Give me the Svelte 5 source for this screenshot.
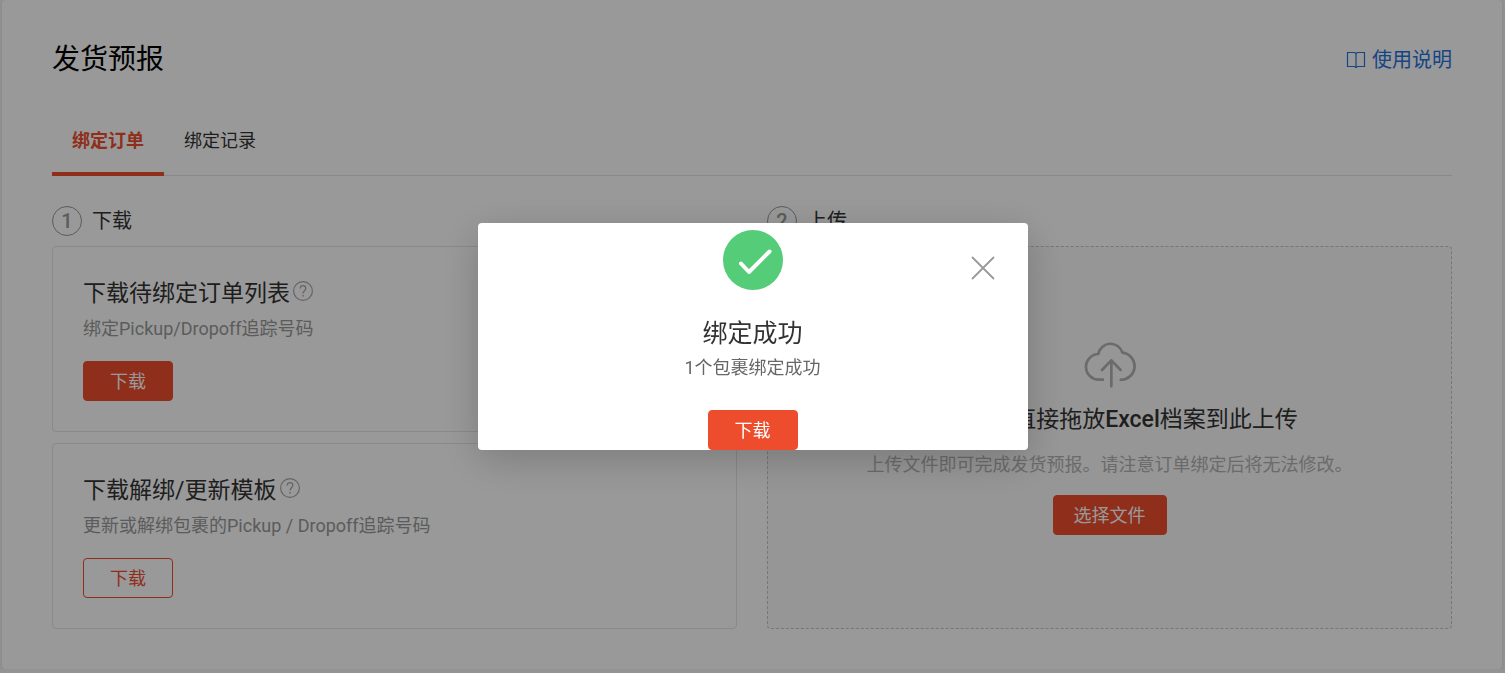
<script>
  let activeTab = $state('bind');
  let showResult = $state(true);

  const tabs = [
    { key: 'bind', label: '绑定订单' },
    { key: 'history', label: '绑定记录' },
  ];

  const downloads = [
    { title: '下载待绑定订单列表', desc: '绑定Pickup/Dropoff追踪号码', primary: true },
    { title: '下载解绑/更新模板', desc: '更新或解绑包裹的Pickup / Dropoff追踪号码', primary: false },
  ];
</script>

<main class="card">
  <header class="page-header">
    <h1>发货预报</h1>
    <a class="guide" href="#guide">
      <svg width="20" height="18" viewBox="0 0 20 18" fill="none" stroke="currentColor" stroke-width="1.2" aria-hidden="true">
        <path d="M1.5 1.5H8.5L10 2.5L11.5 1.5H18.5V15.5H11.5L10 16.5L8.5 15.5H1.5Z" />
        <path d="M10 2.5V16.5" />
      </svg>
      使用说明
    </a>
  </header>

  <nav class="tabs">
    {#each tabs as tab (tab.key)}
      <button class="tab" class:active={activeTab === tab.key} onclick={() => activeTab = tab.key}>{tab.label}</button>
    {/each}
  </nav>

  <div class="steps">
    <section class="step">
      <h2><span class="num">1</span>下载</h2>
      <div class="step-body">
        {#each downloads as item}
          <div class="panel">
            <h3>
              {item.title}
              <svg class="help" width="20" height="20" viewBox="0 0 20 20" fill="none" stroke="currentColor" aria-hidden="true">
                <circle cx="10" cy="10" r="9.4" stroke-width="1.2" />
                <path d="M7.2 7.5C7.2 5.6 8.4 4.6 10 4.6S12.8 5.6 12.8 7.3C12.8 9.6 10 9.8 10 12.6" stroke-width="1.3" />
                <path d="M10 14V15.5" stroke-width="1.5" />
              </svg>
            </h3>
            <p>{item.desc}</p>
            <button class="btn" class:outline={!item.primary}>下载</button>
          </div>
        {/each}
      </div>
    </section>

    <section class="step">
      <h2><span class="num">2</span>上传</h2>
      <div class="dropzone">
        <svg width="52" height="49" viewBox="0 0 156 147" fill="none" stroke="currentColor" stroke-width="8" aria-hidden="true">
          <path d="M60 119H46A38.5 38.5 0 0 1 43 42A37 37 0 0 1 115 38A40.5 40.5 0 0 1 107 119" stroke-linejoin="round" />
          <path d="M82 139V61M54 90L82 61L110 90" stroke-linecap="round" stroke-linejoin="round" />
        </svg>
        <h3>您也可以直接拖放<span class="latin">Excel</span>档案到此上传</h3>
        <p>上传文件即可完成发货预报。请注意订单绑定后将无法修改。</p>
        <button class="btn">选择文件</button>
      </div>
    </section>
  </div>
</main>

{#if showResult}
  <div class="mask">
    <div class="modal" role="dialog" aria-modal="true" aria-labelledby="result-title">
      <button class="close" aria-label="关闭" onclick={() => showResult = false}>
        <svg width="24" height="24" viewBox="0 0 24 24" fill="none" stroke="currentColor" stroke-width="1.8" stroke-linecap="round">
          <path d="M1.5 1.5L22.5 22.5M22.5 1.5L1.5 22.5" />
        </svg>
      </button>
      <svg width="60" height="60" viewBox="0 0 60 60" fill="none" aria-hidden="true">
        <circle cx="30" cy="30" r="30" fill="#55cc77" />
        <path d="M18 33.5L26 42L46.5 21.5" stroke="#fff" stroke-width="4" stroke-linecap="round" stroke-linejoin="round" />
      </svg>
      <h2 id="result-title">绑定成功</h2>
      <p>1个包裹绑定成功</p>
      <button class="btn">下载</button>
    </div>
  </div>
{/if}

<style>
  :global(body) {
    background: #f6f6f6;
    color: #333;
    font-family: Roboto, "Noto Sans CJK SC", sans-serif;
    font-size: 18px;
  }
  h1, h2, h3, p {
    margin: 0;
    font-weight: 400;
  }
  button {
    font: inherit;
    cursor: pointer;
  }
  svg {
    flex-shrink: 0;
  }
  .card {
    margin: 0 3px 0 2px;
    padding: 40px 50px;
    background: #fff;
    border-radius: 4px;
    box-shadow: 0 1px 5px rgba(0, 0, 0, 0.12);
  }
  .page-header {
    display: flex;
    align-items: center;
    justify-content: space-between;
  }
  h1 {
    font-size: 28px;
    line-height: 40px;
    color: #000;
  }
  .guide {
    display: flex;
    align-items: center;
    gap: 6px;
    font-size: 20px;
    line-height: 30px;
    color: #2673dd;
    text-decoration: none;
  }
  .tabs {
    display: flex;
    margin-top: 26px;
    box-shadow: inset 0 -1px #e5e5e5;
  }
  .tab {
    padding: 0 20px;
    height: 70px;
    border: none;
    border-bottom: 4px solid transparent;
    background: none;
    color: #333;
  }
  .tab.active {
    border-bottom-color: #ee4d2d;
    color: #ee4d2d;
    font-weight: 700;
  }
  .steps {
    display: grid;
    grid-template-columns: 1fr 1fr;
    gap: 30px;
    margin-top: 30px;
  }
  .step {
    display: flex;
    flex-direction: column;
    gap: 10px;
  }
  .step h2 {
    display: flex;
    align-items: center;
    gap: 10px;
    font-size: 20px;
    line-height: 30px;
  }
  .num {
    box-sizing: border-box;
    width: 30px;
    height: 30px;
    border: 1px solid #999;
    border-radius: 50%;
    line-height: 28px;
    text-align: center;
    font-weight: 500;
    color: #999;
  }
  .step-body {
    display: grid;
    gap: 11px;
  }
  .panel {
    padding: 30px;
    border: 1px solid #e5e5e5;
    border-radius: 4px;
  }
  h3 {
    display: flex;
    align-items: center;
    font-size: 23px;
    line-height: 34px;
  }
  .help {
    margin: 0 0 6px 3px;
    color: #a8a8a8;
  }
  .panel p {
    margin: 6px 0 20px;
    line-height: 24px;
    color: #999;
  }
  .btn {
    display: block;
    min-width: 90px;
    height: 40px;
    padding: 0 20px 2px;
    border: 1px solid #ee4d2d;
    border-radius: 4px;
    background: #ee4d2d;
    color: #fff;
  }
  .btn.outline {
    background: #fff;
    color: #ee4d2d;
  }
  .dropzone {
    flex: 1;
    display: flex;
    flex-direction: column;
    align-items: center;
    justify-content: center;
    border: 1px dashed #c6c6c6;
    border-radius: 4px;
    background: #fafafa;
    color: #b2b2b2;
  }
  .dropzone h3 {
    margin-top: 14px;
    color: #333;
  }
  .latin {
    font-weight: 500;
  }
  .dropzone p {
    margin: 16px 0 18px;
    line-height: 24px;
  }
  .mask {
    position: fixed;
    inset: 0;
    display: flex;
    align-items: center;
    justify-content: center;
    background: rgba(0, 0, 0, 0.4);
  }
  .modal {
    position: relative;
    display: flex;
    flex-direction: column;
    align-items: center;
    width: 550px;
    padding-top: 7px;
    border-radius: 4px;
    background: #fff;
    box-shadow: 0 10px 40px rgba(0, 0, 0, 0.2);
  }
  .modal h2 {
    margin-top: 26px;
    font-size: 25px;
    line-height: 36px;
  }
  .modal p {
    margin: 4px 0 30px;
    line-height: 24px;
    color: #666;
  }
  .close {
    position: absolute;
    top: 33px;
    right: 33px;
    display: flex;
    padding: 0;
    border: none;
    background: none;
    color: #999;
  }
</style>
